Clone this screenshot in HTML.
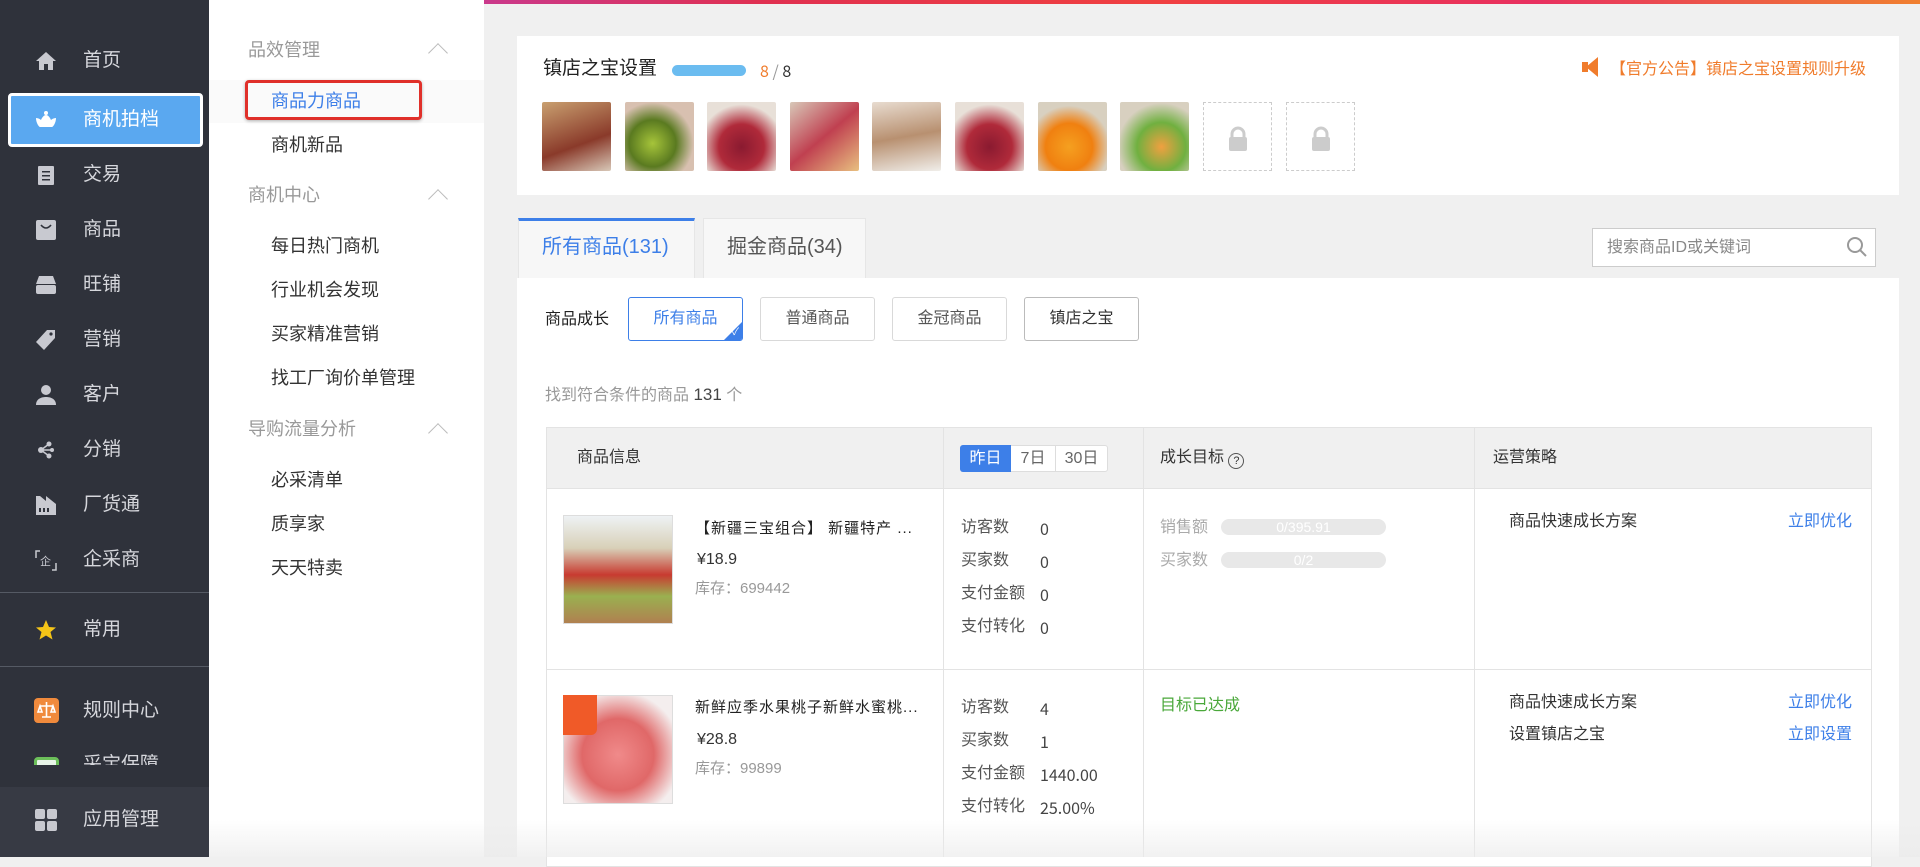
<!DOCTYPE html>
<html><head><meta charset="utf-8">
<style>
*{margin:0;padding:0;box-sizing:border-box}
body{width:1920px;height:857px;overflow:hidden;background:#f0f0f0;font-family:"Liberation Sans","Noto Sans CJK SC",sans-serif;position:relative;color:#333}
.a{position:absolute;white-space:nowrap;line-height:24px}
.side{left:0;top:0;width:209px;height:857px;background:#2f323b}
.si{left:0;width:209px;height:40px;line-height:40px;color:#d6d7dc;font-size:19px}
.si .ic{position:absolute;left:35px;top:9px;width:22px;height:22px}
.si .t{position:absolute;left:83px}
.sub{left:209px;top:0;width:275px;height:857px;background:#fff}
.sh{left:248px;font-size:18px;color:#999}
.sit{left:271px;font-size:18px;color:#333}
.chev{left:431px;width:14px;height:14px;border-left:1.5px solid #bbb;border-top:1.5px solid #bbb;transform:rotate(45deg)}
.card{background:#fff}
.th{top:102px;width:69px;height:69px;border-radius:2px}
.btn{top:297px;height:44px;line-height:42px;width:115px;text-align:center;border:1px solid #d9d9d9;border-radius:3px;font-size:16px;color:#555;background:#fff}
.lab{font-size:16px;color:#555}
.val{font-size:16px;color:#444;font-family:"Noto Sans CJK SC",sans-serif}
</style></head><body>
<div class="a" style="left:0;top:0;width:1920px;height:4px;background:linear-gradient(90deg,#e23c5a,#c23ca0,#e03050,#f04040,#e83060,#f08030)"></div>

<div class="a side"></div>
<div class="a si" style="top:41px"><svg class="ic" viewBox="0 0 22 22"><path d="M11 2L1 11h3v9h5v-6h4v6h5v-9h3z" fill="#c8c9d0"/></svg><span class="t">首页</span></div>
<div class="a" style="left:8px;top:93px;width:195px;height:54px;border:3px solid #fff;border-radius:4px;background:#5aa8f0"></div>
<div class="a si" style="top:100px;color:#fff"><svg class="ic" viewBox="0 0 22 22"><circle cx="11" cy="4" r="2" fill="#fff"/><path d="M1 9c3 0 5 2 5 2s2-5 5-5 5 5 5 5 2-2 5-2c0 5-3 9-4 9H5C4 18 1 14 1 9z" fill="#fff"/></svg><span class="t">商机拍档</span></div>
<div class="a si" style="top:155px"><svg class="ic" viewBox="0 0 22 22"><rect x="3" y="2" width="16" height="19" rx="1" fill="#c8c9d0"/><rect x="7" y="7" width="8" height="1.5" fill="#2f323b"/><rect x="7" y="11" width="8" height="1.5" fill="#2f323b"/><rect x="7" y="15" width="8" height="1.5" fill="#2f323b"/></svg><span class="t">交易</span></div>
<div class="a si" style="top:210px"><svg class="ic" viewBox="0 0 22 22"><rect x="1" y="1" width="20" height="20" rx="2" fill="#c8c9d0"/><path d="M6 6q5 6 10 0" stroke="#2f323b" stroke-width="1.6" fill="none"/></svg><span class="t">商品</span></div>
<div class="a si" style="top:265px"><svg class="ic" viewBox="0 0 22 22"><path d="M4 2h14l3 8H1z" fill="#c8c9d0"/><rect x="1" y="11" width="20" height="9" rx="2" fill="#c8c9d0"/></svg><span class="t">旺铺</span></div>
<div class="a si" style="top:320px"><svg class="ic" viewBox="0 0 22 22"><path d="M12 1h8v8L9 21 1 13z" fill="#c8c9d0"/><circle cx="16" cy="5" r="1.6" fill="#2f323b"/></svg><span class="t">营销</span></div>
<div class="a si" style="top:375px"><svg class="ic" viewBox="0 0 22 22"><circle cx="11" cy="6" r="5" fill="#c8c9d0"/><path d="M1 21c0-6 5-8 10-8s10 2 10 8z" fill="#c8c9d0"/></svg><span class="t">客户</span></div>
<div class="a si" style="top:430px"><svg class="ic" viewBox="0 0 22 22"><circle cx="6" cy="11" r="3" fill="#c8c9d0"/><circle cx="14" cy="5" r="2.5" fill="#c8c9d0"/><circle cx="14" cy="17" r="2.5" fill="#c8c9d0"/><circle cx="17" cy="11" r="2" fill="#c8c9d0"/><path d="M6 11L14 5M6 11l8 6M6 11h11" stroke="#c8c9d0" stroke-width="1.5"/></svg><span class="t">分销</span></div>
<div class="a si" style="top:485px"><svg class="ic" viewBox="0 0 22 22"><path d="M1 2h4l6 5V2l10 8v11H1z" fill="#c8c9d0"/><rect x="4" y="14" width="2" height="4" fill="#2f323b"/><rect x="8" y="14" width="2" height="4" fill="#2f323b"/><rect x="12" y="14" width="2" height="4" fill="#2f323b"/></svg><span class="t">厂货通</span></div>
<div class="a si" style="top:540px"><svg class="ic" viewBox="0 0 22 22"><path d="M5 2H1v7M17 21h4v-7" stroke="#c8c9d0" stroke-width="1.5" fill="none"/><text x="5" y="16" font-size="11" fill="#c8c9d0" font-family="Noto Sans CJK SC">企</text></svg><span class="t">企采商</span></div>
<div class="a" style="left:0;top:592px;width:209px;height:1px;background:#555a64"></div>
<div class="a si" style="top:610px"><svg class="ic" viewBox="0 0 22 22"><path d="M11 1l3 7 7 .5-5.5 4.5 2 7.5L11 16.5 4.5 20.5l2-7.5L1 8.5 8 8z" fill="#f5c518"/></svg><span class="t">常用</span></div>
<div class="a" style="left:0;top:666px;width:209px;height:1px;background:#555a64"></div>
<div class="a si" style="top:691px"><svg class="ic" style="width:25px;height:25px;left:34px;top:7px" viewBox="0 0 25 25"><rect width="25" height="25" rx="4" fill="#f08a3c"/><path d="M12.5 4v15M6 8h13M4 14l2-6 2 6zM17 14l2-6 2 6zM8 19h9" stroke="#fff" stroke-width="1.6" fill="none"/></svg><span class="t">规则中心</span></div>
<div class="a" style="left:0;top:745px;width:209px;height:20px;overflow:hidden"><div class="a" style="left:34px;top:12px;width:25px;height:25px;border-radius:4px;background:#e8f4e8;border:3px solid #6cbf5a"></div><div class="a" style="left:83px;top:8px;font-size:19px;color:#d6d7dc;line-height:24px">采宝保障</div></div>
<div class="a" style="left:0;top:787px;width:209px;height:70px;background:#373a44"></div>
<div class="a si" style="top:800px"><svg class="ic" viewBox="0 0 22 22"><rect x="0" y="0" width="10" height="10" rx="2" fill="#c8c9d0"/><rect x="12" y="0" width="10" height="10" rx="2" fill="#c8c9d0"/><rect x="0" y="12" width="10" height="10" rx="2" fill="#c8c9d0"/><rect x="12" y="12" width="10" height="10" rx="2" fill="#c8c9d0"/></svg><span class="t">应用管理</span></div>

<div class="a sub"></div>
<div class="a sh" style="top:38px">品效管理</div><div class="a chev" style="top:46px"></div>
<div class="a" style="left:209px;top:80px;width:275px;height:43px;background:#fafafa"></div>
<div class="a" style="left:245px;top:80px;width:177px;height:40px;border:3px solid #e0302a;border-radius:4px;box-shadow:0 1px 3px rgba(0,0,0,.3)"></div>
<div class="a sit" style="top:89px;color:#3d7fe8">商品力商品</div>
<div class="a sit" style="top:133px">商机新品</div>
<div class="a sh" style="top:183px">商机中心</div><div class="a chev" style="top:192px"></div>
<div class="a sit" style="top:234px">每日热门商机</div>
<div class="a sit" style="top:278px">行业机会发现</div>
<div class="a sit" style="top:322px">买家精准营销</div>
<div class="a sit" style="top:366px">找工厂询价单管理</div>
<div class="a sh" style="top:417px">导购流量分析</div><div class="a chev" style="top:426px"></div>
<div class="a sit" style="top:468px">必采清单</div>
<div class="a sit" style="top:512px">质享家</div>
<div class="a sit" style="top:556px">天天特卖</div>

<div class="a card" style="left:517px;top:36px;width:1382px;height:159px"></div>
<div class="a" style="left:543px;top:57px;font-size:19px;color:#222">镇店之宝设置</div>
<div class="a" style="left:672px;top:65px;width:74px;height:11px;border-radius:6px;background:#6bbcf0"></div>
<div class="a" style="left:760px;top:58px;font-size:16px;color:#f07c2c;font-family:'Noto Sans CJK SC',sans-serif">8<span style="color:#999"> / </span><span style="color:#333">8</span></div>
<div class="a" style="left:1586px;top:57px;width:0;height:0;border-right:12px solid #f07c2c;border-top:10px solid transparent;border-bottom:10px solid transparent"></div>
<div class="a" style="left:1582px;top:62px;width:6px;height:10px;background:#f07c2c"></div>
<div class="a" style="left:1610px;top:58px;font-size:16px;color:#f07c2c">【官方公告】镇店之宝设置规则升级</div>

<div class="a th" style="left:542px;background:linear-gradient(160deg,#c9a070,#8a3a2a 60%,#d8c8b8)"></div>
<div class="a th" style="left:625px;background:radial-gradient(circle at 40% 60%,#a6c43a,#5a7a20 40%,#d8c0b0 70%)"></div>
<div class="a th" style="left:707px;background:radial-gradient(circle at 50% 65%,#8a1a30,#b02a3a 40%,#e8e0d8 75%)"></div>
<div class="a th" style="left:790px;background:linear-gradient(140deg,#d8c8b8,#c04050 50%,#e8c080)"></div>
<div class="a th" style="left:872px;background:linear-gradient(170deg,#e8dcd0,#b89070 50%,#f0eeea)"></div>
<div class="a th" style="left:955px;background:radial-gradient(circle at 50% 65%,#8a1a30,#b02a3a 40%,#e8e0d8 75%)"></div>
<div class="a th" style="left:1038px;background:radial-gradient(circle at 45% 65%,#f5a020,#f08010 40%,#d8d0c0 70%)"></div>
<div class="a th" style="left:1120px;background:radial-gradient(circle at 60% 65%,#f0a040,#70b040 40%,#d8d0c0 72%)"></div>
<div class="a" style="left:1203px;top:102px;width:69px;height:69px;border:1.5px dashed #ccc"></div>
<div class="a" style="left:1286px;top:102px;width:69px;height:69px;border:1.5px dashed #ccc"></div>
<svg class="a" style="left:1228px;top:126px" width="20" height="26" viewBox="0 0 20 26"><path d="M4 12V8a6 6 0 0112 0v4" stroke="#ccc" stroke-width="3" fill="none"/><rect x="1" y="11" width="18" height="14" rx="2" fill="#ccc"/></svg>
<svg class="a" style="left:1311px;top:126px" width="20" height="26" viewBox="0 0 20 26"><path d="M4 12V8a6 6 0 0112 0v4" stroke="#ccc" stroke-width="3" fill="none"/><rect x="1" y="11" width="18" height="14" rx="2" fill="#ccc"/></svg>

<div class="a" style="left:518px;top:218px;width:177px;height:61px;background:#f7f7f7;border:1px solid #e6e6e6;border-top:3px solid #3d7fe8;border-bottom:none"></div>
<div class="a" style="left:542px;top:235px;font-size:20px;color:#3d7fe8">所有商品(131)</div>
<div class="a" style="left:703px;top:218px;width:163px;height:60px;background:#f7f7f7;border:1px solid #e6e6e6;border-bottom:none"></div>
<div class="a" style="left:727px;top:235px;font-size:20px;color:#555">掘金商品(34)</div>
<div class="a" style="left:1592px;top:228px;width:284px;height:39px;background:#fff;border:1px solid #ccc"></div>
<div class="a" style="left:1607px;top:236px;font-size:16px;color:#888">搜索商品ID或关键词</div>
<svg class="a" style="left:1846px;top:236px" width="22" height="22" viewBox="0 0 22 22"><circle cx="9" cy="9" r="7" stroke="#999" stroke-width="2" fill="none"/><path d="M14 14l6 6" stroke="#999" stroke-width="2"/></svg>

<div class="a card" style="left:517px;top:278px;width:1382px;height:579px"></div>
<div class="a" style="left:545px;top:308px;font-size:16px;color:#222">商品成长</div>
<div class="a btn" style="left:628px;border-color:#3d7fe8;color:#3d7fe8;overflow:hidden;line-height:42px">所有商品<div class="a" style="right:-1px;bottom:-1px;width:0;height:0;border-left:20px solid transparent;border-bottom:20px solid #3d7fe8"></div><div class="a" style="right:3px;bottom:2px;font-size:10px;color:#fff;line-height:10px">✓</div></div>
<div class="a btn" style="left:760px;line-height:42px">普通商品</div>
<div class="a btn" style="left:892px;line-height:42px">金冠商品</div>
<div class="a btn" style="left:1024px;border-color:#bbb;color:#333;line-height:42px">镇店之宝</div>
<div class="a" style="left:545px;top:383px;font-size:16px;color:#999">找到符合条件的商品 <span style="color:#444;font-size:17px">131</span> 个</div>

<div class="a" style="left:546px;top:427px;width:1326px;height:440px;border:1px solid #e3e3e3;background:#fff"></div>
<div class="a" style="left:547px;top:428px;width:1324px;height:61px;background:#f0f0f0;border-bottom:1px solid #e3e3e3"></div>
<div class="a" style="left:943px;top:428px;width:1px;height:429px;background:#e3e3e3"></div>
<div class="a" style="left:1143px;top:428px;width:1px;height:429px;background:#e3e3e3"></div>
<div class="a" style="left:1474px;top:428px;width:1px;height:429px;background:#e3e3e3"></div>
<div class="a" style="left:547px;top:669px;width:1324px;height:1px;background:#e3e3e3"></div>
<div class="a" style="left:577px;top:446px;font-size:16px;color:#333">商品信息</div>
<div class="a" style="left:960px;top:445px;width:148px;height:27px;border:1px solid #ddd;border-radius:3px;background:#fff"></div>
<div class="a" style="left:960px;top:445px;width:51px;height:27px;background:#3d7fe8;border-radius:3px 0 0 3px;color:#fff;font-size:16px;text-align:center;line-height:27px">昨日</div>
<div class="a" style="left:1011px;top:445px;width:45px;height:27px;border-right:1px solid #ddd;color:#666;font-size:16px;text-align:center;line-height:27px">7日</div>
<div class="a" style="left:1056px;top:445px;width:51px;height:27px;color:#666;font-size:16px;text-align:center;line-height:27px">30日</div>
<div class="a" style="left:1160px;top:446px;font-size:16px;color:#333">成长目标 <span style="display:inline-block;width:16px;height:16px;border:1px solid #555;border-radius:50%;font-size:11px;line-height:14px;text-align:center;vertical-align:-2px">?</span></div>
<div class="a" style="left:1493px;top:446px;font-size:16px;color:#333">运营策略</div>

<div class="a" style="left:563px;top:515px;width:110px;height:109px;border:1px solid #ddd;background:linear-gradient(180deg,#eef2f4,#d8d0b8 30%,#c83a30 55%,#9ab050 75%,#b08050)"></div>
<div class="a" style="left:695px;top:517px;font-size:15px;color:#222;letter-spacing:1px">【新疆三宝组合】 新疆特产 ...</div>
<div class="a" style="left:697px;top:548px;font-size:16px;color:#333">¥18.9</div>
<div class="a" style="left:695px;top:577px;font-size:15px;color:#999">库存：699442</div>
<div class="a lab" style="left:961px;top:516px">访客数</div><div class="a val" style="left:1040px;top:516px">0</div>
<div class="a lab" style="left:961px;top:549px">买家数</div><div class="a val" style="left:1040px;top:549px">0</div>
<div class="a lab" style="left:961px;top:582px">支付金额</div><div class="a val" style="left:1040px;top:582px">0</div>
<div class="a lab" style="left:961px;top:615px">支付转化</div><div class="a val" style="left:1040px;top:615px">0</div>
<div class="a" style="left:1160px;top:516px;font-size:16px;color:#aaa">销售额</div>
<div class="a" style="left:1221px;top:519px;width:165px;height:16px;border-radius:8px;background:#e8e8e8;color:#fff;font-size:14px;text-align:center;line-height:16px">0/395.91</div>
<div class="a" style="left:1160px;top:549px;font-size:16px;color:#aaa">买家数</div>
<div class="a" style="left:1221px;top:552px;width:165px;height:16px;border-radius:8px;background:#e8e8e8;color:#fff;font-size:14px;text-align:center;line-height:16px">0/2</div>
<div class="a" style="left:1509px;top:510px;font-size:16px;color:#333">商品快速成长方案</div>
<div class="a" style="left:1788px;top:510px;font-size:16px;color:#3d7fe8">立即优化</div>

<div class="a" style="left:563px;top:695px;width:110px;height:109px;border:1px solid #ddd;background:radial-gradient(circle at 50% 55%,#f08a8a,#e06868 45%,#f4eeee 80%)"></div>
<div class="a" style="left:563px;top:695px;width:34px;height:40px;background:#f05a28;border-radius:0 0 6px 0"></div>
<div class="a" style="left:695px;top:696px;font-size:15px;color:#222;letter-spacing:1px">新鲜应季水果桃子新鲜水蜜桃...</div>
<div class="a" style="left:697px;top:728px;font-size:16px;color:#333">¥28.8</div>
<div class="a" style="left:695px;top:757px;font-size:15px;color:#999">库存：99899</div>
<div class="a lab" style="left:961px;top:696px">访客数</div><div class="a val" style="left:1040px;top:696px">4</div>
<div class="a lab" style="left:961px;top:729px">买家数</div><div class="a val" style="left:1040px;top:729px">1</div>
<div class="a lab" style="left:961px;top:762px">支付金额</div><div class="a val" style="left:1040px;top:762px">1440.00</div>
<div class="a lab" style="left:961px;top:795px">支付转化</div><div class="a val" style="left:1040px;top:795px">25.00%</div>
<div class="a" style="left:1160px;top:694px;font-size:16px;color:#4aa83a">目标已达成</div>
<div class="a" style="left:1509px;top:691px;font-size:16px;color:#333">商品快速成长方案</div>
<div class="a" style="left:1788px;top:691px;font-size:16px;color:#3d7fe8">立即优化</div>
<div class="a" style="left:1509px;top:723px;font-size:16px;color:#333">设置镇店之宝</div>
<div class="a" style="left:1788px;top:723px;font-size:16px;color:#3d7fe8">立即设置</div>
<div class="a" style="left:209px;top:820px;width:1711px;height:37px;background:linear-gradient(180deg,rgba(240,240,240,0),rgba(235,235,235,.7))"></div>
</body></html>
